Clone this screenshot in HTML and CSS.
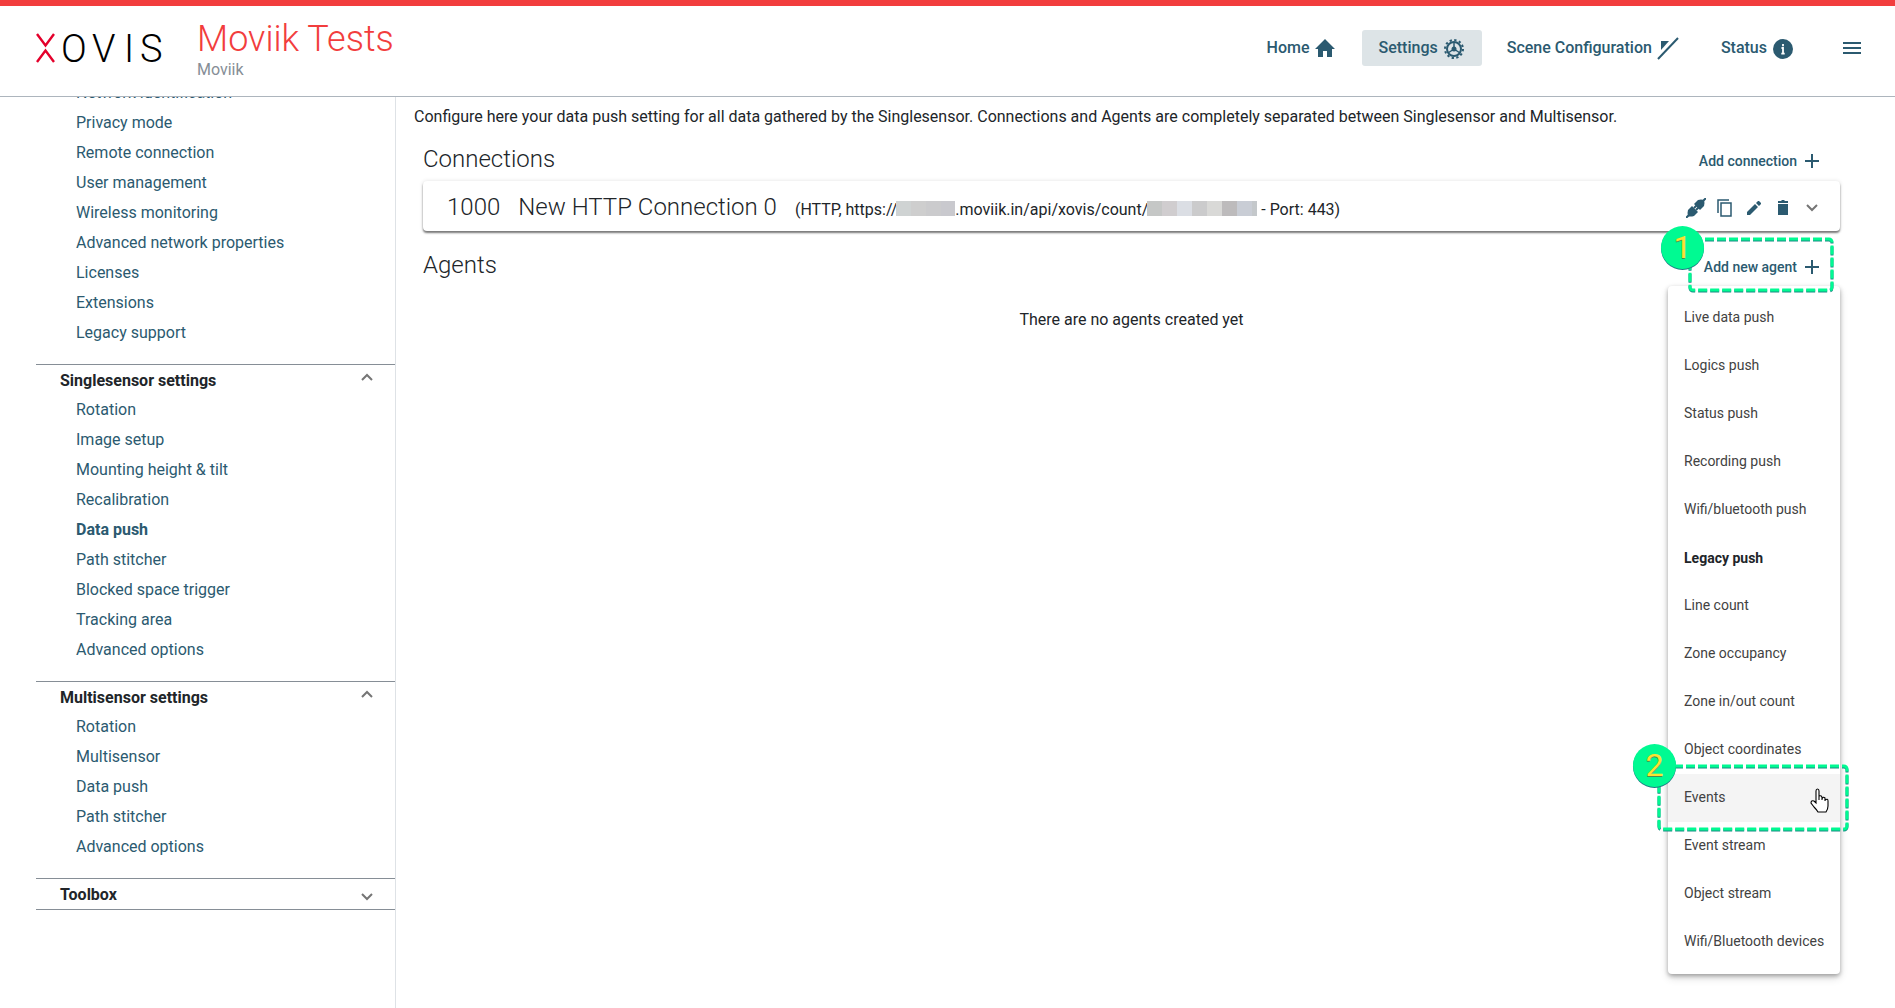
FILE: index.html
```html
<!DOCTYPE html>
<html lang="en">
<head>
    <meta charset="UTF-8">
    <meta name="viewport" content="width=device-width, initial-scale=1.0">
    <title>Moviik Tests - Data push</title>
    <link rel="stylesheet" href="styles.css">
</head>
<body>
    <header class="topbar">
        <a href="#" class="logo" aria-label="Xovis">
            <svg width="132" height="48" viewBox="0 -8 132 48">
                <path d="M2 2 L10.500 13.500 L19 2 M2 30 L10.500 18.500 L19 30" fill="none" stroke="#e4002b" stroke-width="2.400"/>
                <text class="logo-text" x="26 57 89 105" y="30">OVIS</text>
            </svg>
        </a>
        <div class="device">
            <h1>Moviik Tests</h1>
            <p>Moviik</p>
        </div>
        <nav class="main-nav">
            <a href="#">Home
                <svg width="24" height="24" viewBox="-2 -3 24 24"><path d="M10 0 L0 10 H3 V18 H8 V12 H12 V18 H17 V10 H20 Z"/></svg>
            </a>
            <a href="#" class="active">Settings
                <svg width="24" height="24" viewBox="-2 -3 24 24">
                    <circle cx="10" cy="10" r="9" fill="none" stroke="currentColor" stroke-width="2" stroke-dasharray="2.300 2.410"/>
                    <circle cx="10" cy="10" r="7" fill="none" stroke="currentColor" stroke-width="2"/>
                    <path d="M10 10 V3 M10 10 L4 14 M10 10 L16 14" stroke="currentColor" stroke-width="1.500"/>
                    <circle cx="10" cy="10" r="2.500"/>
                </svg>
            </a>
            <a href="#">Scene Configuration
                <svg width="24" height="24" viewBox="0 0 24 24"><path d="M5 5 H13 L5 14 Z"/><path d="M2 23 L22 2" stroke="currentColor" stroke-width="2"/></svg>
            </a>
            <a href="#">Status
                <svg width="24" height="24" viewBox="-2 -3 24 24"><circle cx="10" cy="10" r="10"/><path d="M10 5 V7.200 M8.500 9 H10 V15 M8.300 14.600 H11.700" fill="none" stroke="#fff" stroke-width="1.800"/></svg>
            </a>
            <button class="burger" aria-label="Menu">
                <svg width="18" height="12" viewBox="0 0 18 12"><path d="M0 0 H18 V2 H0 Z M0 5 H18 V7 H0 Z M0 10 H18 V12 H0 Z"/></svg>
            </button>
        </nav>
    </header>

    <div class="page">
        <aside class="sidebar">
            <ul class="links general">
                <li><a href="#">Network identification</a></li>
                <li><a href="#">Privacy mode</a></li>
                <li><a href="#">Remote connection</a></li>
                <li><a href="#">User management</a></li>
                <li><a href="#">Wireless monitoring</a></li>
                <li><a href="#">Advanced network properties</a></li>
                <li><a href="#">Licenses</a></li>
                <li><a href="#">Extensions</a></li>
                <li><a href="#">Legacy support</a></li>
            </ul>
            <section>
                <button class="section-head">Singlesensor settings
                    <svg width="12" height="8" viewBox="0 0 12 8"><path d="M1 7 L6 2 L11 7"/></svg>
                </button>
                <ul class="links">
                    <li><a href="#">Rotation</a></li>
                    <li><a href="#">Image setup</a></li>
                    <li><a href="#">Mounting height &amp; tilt</a></li>
                    <li><a href="#">Recalibration</a></li>
                    <li><a href="#" class="current">Data push</a></li>
                    <li><a href="#">Path stitcher</a></li>
                    <li><a href="#">Blocked space trigger</a></li>
                    <li><a href="#">Tracking area</a></li>
                    <li><a href="#">Advanced options</a></li>
                </ul>
            </section>
            <section>
                <button class="section-head">Multisensor settings
                    <svg width="12" height="8" viewBox="0 0 12 8"><path d="M1 7 L6 2 L11 7"/></svg>
                </button>
                <ul class="links">
                    <li><a href="#">Rotation</a></li>
                    <li><a href="#">Multisensor</a></li>
                    <li><a href="#">Data push</a></li>
                    <li><a href="#">Path stitcher</a></li>
                    <li><a href="#">Advanced options</a></li>
                </ul>
            </section>
            <section class="closed">
                <button class="section-head">Toolbox
                    <svg width="12" height="8" viewBox="0 0 12 8"><path d="M1 1 L6 6 L11 1"/></svg>
                </button>
            </section>
        </aside>

        <main class="content">
            <p class="intro">Configure here your data push setting for all data gathered by the Singlesensor. Connections and Agents are completely separated between Singlesensor and Multisensor.</p>

            <div class="block-head">
                <h2>Connections</h2>
                <button class="add">Add connection
                    <svg width="14" height="14" viewBox="0 0 14 14"><path d="M6 0 H8 V6 H14 V8 H8 V14 H6 V8 H0 V6 H6 Z"/></svg>
                </button>
            </div>
            <div class="card">
                <span class="conn-id">1000</span>
                <span class="conn-name">New HTTP Connection 0</span>
                <span class="conn-url">(HTTP, https://<span class="mask mask-host"></span>.moviik.in/api/xovis/count/<span class="mask mask-path"></span> - Port: 443)</span>
                <div class="tools">
                    <button aria-label="Test connection">
                        <svg width="20" height="20" viewBox="0 0 20 20"><path d="M0 20 L4 16 M16 4 L20 0 M8 10 L11 7 M10 12 L13 9" stroke="currentColor" stroke-width="2"/><path d="M2 12 L6 8 L12 14 L8 18 Q4 19 2 18 Q1 15 2 12 Z"/><path d="M8 6 L12 2 Q15 1 18 2 Q19 5 18 8 L14 12 Z"/></svg>
                    </button>
                    <button aria-label="Copy">
                        <svg width="20" height="20" viewBox="0 0 20 20"><path d="M3 15 V2 H14 M6 5 H16 V18 H6 Z" fill="none" stroke="currentColor" stroke-width="1.500"/></svg>
                    </button>
                    <button aria-label="Edit">
                        <svg width="20" height="20" viewBox="0 0 20 20"><path d="M3 14 V17 H6 L14 9 L11 6 Z M12 5 L15 8 L17 6 V5 L15 3 H14 Z"/></svg>
                    </button>
                    <button aria-label="Delete">
                        <svg width="20" height="20" viewBox="0 0 20 20"><path d="M5 6 H15 V17 H5 Z M5 3 H8 L9 2 H11 L12 3 H15 V5 H5 Z"/></svg>
                    </button>
                    <button class="expand" aria-label="Expand">
                        <svg width="12" height="8" viewBox="0 0 12 8"><path d="M1 1 L6 6 L11 1"/></svg>
                    </button>
                </div>
            </div>

            <div class="block-head agents">
                <h2>Agents</h2>
                <div class="dropdown">
                    <button class="add">Add new agent
                        <svg width="14" height="14" viewBox="0 0 14 14"><path d="M6 0 H8 V6 H14 V8 H8 V14 H6 V8 H0 V6 H6 Z"/></svg>
                    </button>
                    <ul class="menu">
                        <li><button>Live data push</button></li>
                        <li><button>Logics push</button></li>
                        <li><button>Status push</button></li>
                        <li><button>Recording push</button></li>
                        <li><button>Wifi/bluetooth push</button></li>
                        <li class="menu-title">Legacy push</li>
                        <li><button>Line count</button></li>
                        <li><button>Zone occupancy</button></li>
                        <li><button>Zone in/out count</button></li>
                        <li><button>Object coordinates</button></li>
                        <li class="hover">
                            <button>Events</button>
                            <svg class="pointer" width="20" height="26" viewBox="0 0 20 26"><path d="M6 15 V3 Q6 1 7.500 1 Q9 1 9 3 V10 V8 Q12 7 12 10 V11 Q13 8 15 10 V12 Q18 10 18 13 V18 Q18 21 16 24 H8 Q7 22 4 19 L1 15 Q1 12 4 13 Z M9 9 V12 M12 10 V12 M15 11 V13" fill="#fff" stroke="#000" stroke-width="1.100"/></svg>
                            <svg class="outline" width="192" height="68" viewBox="0 0 192 68"><rect class="shade" x="2" y="3" width="188" height="63" rx="3"/><rect x="2" y="2" width="188" height="63" rx="3"/></svg>
                            <span class="step">2</span>
                        </li>
                        <li><button>Event stream</button></li>
                        <li><button>Object stream</button></li>
                        <li><button>Wifi/Bluetooth devices</button></li>
                    </ul>
                    <svg class="outline" width="146" height="56" viewBox="0 0 146 56"><rect class="shade" x="2" y="3" width="142" height="51" rx="3"/><rect x="2" y="2" width="142" height="51" rx="3"/></svg>
                    <span class="step">1</span>
                </div>
            </div>
            <p class="empty">There are no agents created yet</p>
        </main>
    </div>
</body>
</html>
```
FILE: styles.css
```css
* {
    box-sizing: border-box;
}
body {
    margin: 0;
    min-height: 100vh;
    display: flex;
    flex-direction: column;
    font-family: Roboto, sans-serif;
    font-size: 16px;
    line-height: 20px;
    color: #212529;
    background-color: #fff;
}
h1, h2, p, ul {
    margin: 0;
    padding: 0;
}
ul {
    list-style: none;
}
a {
    color: #2b5a70;
    text-decoration: none;
}
button {
    font: inherit;
    color: inherit;
    background: none;
    border: none;
    padding: 0;
    text-align: left;
    cursor: pointer;
}
svg {
    fill: currentColor;
    flex: none;
}

/* header */
.topbar {
    position: relative;
    z-index: 1;
    display: flex;
    align-items: center;
    height: 97px;
    padding: 0 34px 0 35px;
    background-color: #fff;
    border-top: 6px solid #f23d3d;
    border-bottom: 1px solid #adb5bd;
}
.logo {
    display: flex;
    width: 162px;
    margin-bottom: 6px;
}
.logo-text {
    font-size: 38px;
    font-weight: 300;
    fill: #000;
}
.device {
    align-self: flex-start;
    padding-top: 12px;
}
.device h1 {
    font-size: 36px;
    font-weight: 300;
    line-height: 43px;
    color: #f23d3d;
}
.device p {
    line-height: 18px;
    color: #868e96;
}
.main-nav {
    display: flex;
    align-items: center;
    gap: 9px;
    margin-left: auto;
    margin-bottom: 6px;
    font-weight: 500;
}
.main-nav a {
    display: flex;
    align-items: center;
    gap: 4px;
    height: 36px;
    padding: 0 16px;
    border-radius: 3px;
}
.main-nav .active {
    background-color: #dde4e7;
}
.burger {
    display: flex;
    margin-left: 23px;
    color: #2b5a70;
}

/* sidebar */
.page {
    flex: 1;
    display: flex;
}
.sidebar {
    flex: none;
    width: 396px;
    padding-left: 36px;
    border-right: 1px solid #dee2e6;
}
.links {
    padding: 0 0 16px 40px;
}
.links li {
    height: 30px;
    line-height: 30px;
}
.links .current {
    font-weight: 700;
}
/* scrolled under the header */
.general {
    margin-top: -19px;
}
.sidebar section {
    border-top: 1px solid #868e96;
}
.section-head {
    display: flex;
    justify-content: space-between;
    width: 100%;
    padding: 6px 22px 4px 24px;
    font-weight: 700;
}
.section-head svg, .expand svg {
    fill: none;
    stroke: #757575;
    stroke-width: 2;
}
.section-head svg {
    margin-top: 2px;
}
.sidebar .closed {
    border-bottom: 1px solid #868e96;
}
.closed svg {
    margin-top: 8px;
}

/* content */
.content {
    flex: 1;
    padding: 10px 55px 0 27px;
}
.intro {
    margin-left: -9px;
}
.block-head {
    display: flex;
    align-items: center;
    justify-content: space-between;
    height: 54px;
    padding-top: 10px;
}
h2 {
    font-size: 24px;
    font-weight: 300;
    line-height: 30px;
}
.add {
    display: flex;
    align-items: center;
    gap: 8px;
    padding: 4px 21px 0 0;
    font-size: 14px;
    font-weight: 500;
    color: #2b5a70;
}
.card {
    display: flex;
    align-items: center;
    height: 50px;
    padding: 2px 18px 0 24px;
    border-radius: 4px;
    box-shadow: 0 2px 2px rgba(0, 0, 0, .5), 0 0 4px rgba(0, 0, 0, .12);
}
.conn-id, .conn-name {
    margin-right: 18px;
    font-size: 24px;
    font-weight: 300;
}
.conn-url {
    padding-top: 6px;
}
.mask {
    display: inline-block;
    height: 15px;
    margin-left: -1px;
    vertical-align: -1px;
}
.mask-host {
    width: 59px;
    background: linear-gradient(90deg, #cfd3d3 0 15px, #cecece 15px 30px, #cbcbcd 30px 45px, #c9c9ce 45px);
}
.mask-path {
    width: 110px;
    background: linear-gradient(90deg, #c5c7c6 0 15px, #d0cdcf 15px 30px, #dbdee4 30px 45px, #cbcbcc 45px 60px, #d9d9d7 60px 75px, #bdbbbc 75px 90px, #c9cdd5 90px 105px, #c4c8cb 105px);
}
.tools {
    display: flex;
    align-items: center;
    gap: 9px;
    margin-left: auto;
    padding-top: 2px;
    color: #2b5a70;
}
.tools button {
    display: flex;
    justify-content: center;
    width: 20px;
}
.agents {
    height: 58px;
}
.empty {
    padding-top: 21px;
    text-align: center;
}

/* add agent menu */
.dropdown {
    position: relative;
}
.menu {
    position: absolute;
    top: 33px;
    right: 0;
    width: 172px;
    padding: 8px 0;
    font-size: 14px;
    white-space: nowrap;
    color: #424242;
    background-color: #fff;
    border-radius: 4px;
    box-shadow: 0 2px 4px rgba(0, 0, 0, .3), 0 4px 8px rgba(0, 0, 0, .14);
}
.menu li {
    position: relative;
    height: 48px;
}
.menu button, .menu-title {
    width: 100%;
    height: 48px;
    padding: 0 16px;
    line-height: 48px;
}
.menu button {
    padding-bottom: 2px;
    line-height: 46px;
}
.menu-title {
    font-weight: 700;
    color: #212529;
}
.menu .hover {
    background-color: #f4f4f4;
}
.pointer {
    position: absolute;
    top: 14px;
    right: 10px;
}

/* numbered callouts */
.outline {
    position: absolute;
    top: -16px;
    right: 6px;
    fill: none;
    stroke: #00fa92;
    stroke-width: 3;
    stroke-dasharray: 9 3;
}
.outline .shade {
    stroke: #1a8a83;
}
.hover .outline {
    top: -10px;
    right: -9px;
}
.step {
    position: absolute;
    top: -27px;
    right: 136px;
    width: 43px;
    height: 43px;
    font-size: 32px;
    line-height: 43px;
    text-align: center;
    color: #fae232;
    background-color: #00fa92;
    border-radius: 50%;
    box-shadow: 0 1px 0 #1a7a83;
    text-shadow: 0 1px 0 #4a8a50;
}
.hover .step {
    top: -30px;
    right: 164px;
}
```
